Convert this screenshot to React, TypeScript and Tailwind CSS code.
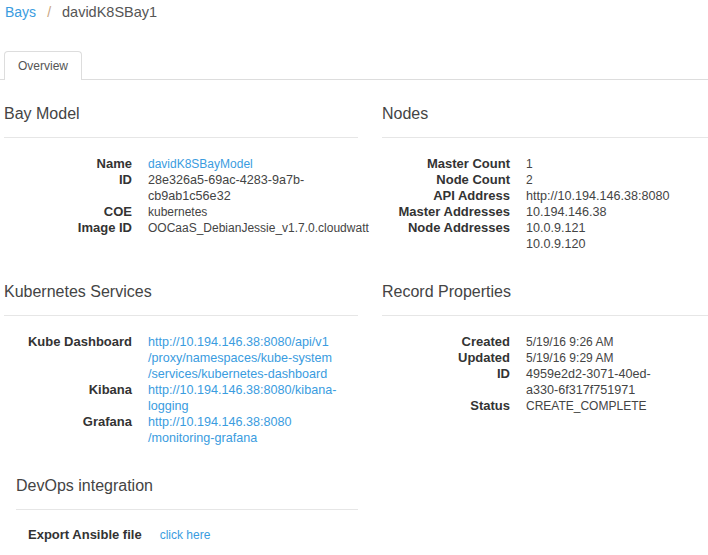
import React from "react";

const F = { fontFamily: '"Liberation Sans", Arial, sans-serif' };

function Row({ label, lines, link, wide }: { label: string; lines: string[]; link?: boolean; wide?: boolean }) {
  return (
    <div className="flex">
      <div className="w-[144px] shrink-0 text-right font-bold text-[13px] text-[#333] pr-4">{label}</div>
      <div className={`whitespace-nowrap ${wide ? "text-[12.6px]" : "text-[12px]"} ${link ? "text-[#3a9ce0]" : "text-[#444]"}`}>
        {lines.map((l, i) => (
          <div key={i}>{l}</div>
        ))}
      </div>
    </div>
  );
}

function Heading({ children }: { children: React.ReactNode }) {
  return (
    <h3 className="text-[16px] leading-[20px] text-[#444] pb-[13px] border-b border-[#e6e6e6]">{children}</h3>
  );
}

export default function App() {
  return (
    <div style={F} className="w-[708px] h-[555px] overflow-hidden bg-white text-[12px] leading-[16px] text-[#333]">
      <div className="pl-[5px] pt-[3px] h-[20px] text-[14px] leading-[18px] flex">
        <span className="text-[#3a9ce0]">Bays</span>
        <span className="text-[#c9a57f] ml-[11px]">/</span>
        <span className="text-[#555] ml-[11px] text-[14.5px]">davidK8SBay1</span>
      </div>
      <div className="mt-[31px] flex items-end">
        <div className="w-[4px] h-px bg-[#ddd]" />
        <div className="h-[29px] w-[78px] border border-b-0 border-[#ddd] rounded-t-[4px] flex items-center justify-center text-[12px] text-[#555]">
          Overview
        </div>
        <div className="flex-1 h-px bg-[#ddd]" />
      </div>
      <div className="flex mt-[24px]">
        <div className="w-[354px] ml-[4px]">
          <Heading>Bay Model</Heading>
          <div className="mt-[18px]">
            <Row label="Name" lines={["davidK8SBayModel"]} link />
            <Row label="ID" lines={["28e326a5-69ac-4283-9a7b-", "cb9ab1c56e32"]} wide />
            <Row label="COE" lines={["kubernetes"]} />
            <Row label="Image ID" lines={["OOCaaS_DebianJessie_v1.7.0.cloudwatt"]} />
          </div>
        </div>
        <div className="flex-1 ml-[24px]">
          <Heading>Nodes</Heading>
          <div className="mt-[18px]">
            <Row label="Master Count" lines={["1"]} />
            <Row label="Node Count" lines={["2"]} />
            <Row label="API Address" lines={["http://10.194.146.38:8080"]} wide />
            <Row label="Master Addresses" lines={["10.194.146.38"]} wide />
            <Row label="Node Addresses" lines={["10.0.9.121", "10.0.9.120"]} wide />
          </div>
        </div>
      </div>
      <div className="flex mt-[30px]">
        <div className="w-[354px] ml-[4px]">
          <Heading>Kubernetes Services</Heading>
          <div className="mt-[18px]">
            <Row
              label="Kube Dashboard"
              lines={["http://10.194.146.38:8080/api/v1", "/proxy/namespaces/kube-system", "/services/kubernetes-dashboard"]}
              link
              wide
            />
            <Row label="Kibana" lines={["http://10.194.146.38:8080/kibana-", "logging"]} link wide />
            <Row label="Grafana" lines={["http://10.194.146.38:8080", "/monitoring-grafana"]} link wide />
          </div>
          <div className="mt-[30px] ml-[12px]">
            <Heading>DevOps integration</Heading>
            <div className="mt-[17px] flex pl-[12px]">
              <span className="font-bold text-[13px] text-[#333]">Export Ansible file</span>
              <span className="ml-[18px] text-[#3a9ce0]">click here</span>
            </div>
          </div>
        </div>
        <div className="flex-1 ml-[24px]">
          <Heading>Record Properties</Heading>
          <div className="mt-[18px]">
            <Row label="Created" lines={["5/19/16 9:26 AM"]} />
            <Row label="Updated" lines={["5/19/16 9:29 AM"]} />
            <Row label="ID" lines={["4959e2d2-3071-40ed-", "a330-6f317f751971"]} wide />
            <Row label="Status" lines={["CREATE_COMPLETE"]} />
          </div>
        </div>
      </div>
    </div>
  );
}
